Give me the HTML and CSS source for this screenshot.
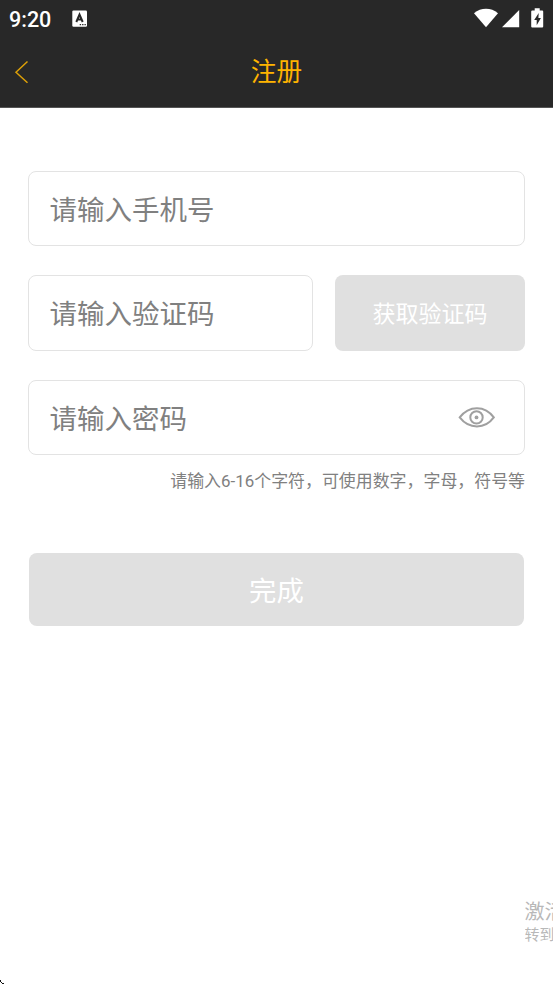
FILE: index.html
```html
<!DOCTYPE html>
<html lang="zh-CN">
<head>
<meta charset="utf-8">
<title>注册</title>
<link rel="stylesheet" href="styles.css">
</head>
<body>
<header class="header">
  <div class="status">
    <span class="time">9:20</span>
    <svg class="notice" width="16" height="18" viewBox="0 0 16 18"><rect x=".3" y=".5" width="14.7" height="16.2" rx="1.2" fill="#fff"/><path d="M4.3 12 7.5 4.500 10.700 12M5.500 9.500h4" fill="none" stroke="#282828" stroke-width="2"/><path d="M7.700 14.600h1.400m1 0h1.400m1 0h1.300" stroke="#282828" stroke-width="1.300"/></svg>
    <svg class="signals" width="72" height="22" viewBox="0 0 72 22" fill="#fff"><path d="M0 5.200C7-.600 17-.600 24 5.200L12 19.300Z"/><path d="M28 19.300 45.200 2v17.300Z"/><path d="M58.200 2.500h2.500V.300h5v2.200h2.500q1 0 1 1v15q0 1-1 1h-10q-1 0-1-1v-15q0-1 1-1Z"/><path d="M64.700 5 60.200 12h2.500v5.300L66.900 10h-2.500Z" fill="#282828"/></svg>
  </div>
  <div class="nav">
    <svg class="back" width="16" height="24" viewBox="0 0 16 24"><path d="M13.500 1.500 2 12.300 13.500 22.700" fill="none" stroke="#dca008" stroke-width="1.500"/></svg>
    <h1 class="title">注册</h1>
  </div>
</header>
<main class="form">
  <div class="field">请输入手机号</div>
  <div class="row">
    <div class="field code">请输入验证码</div>
    <button class="get-code">获取验证码</button>
  </div>
  <div class="field password">
    <span>请输入密码</span>
    <svg class="eye" width="38" height="22" viewBox="0 0 38 22" fill="none" stroke="#a0a0a0" stroke-width="2"><path d="M1.700 10.400C11-1.900 27-1.900 35.800 10.400 27 22.400 11 22.400 1.700 10.400Z"/><circle cx="18.500" cy="10.400" r="6.200"/><circle cx="18.500" cy="10.400" r="1.900" fill="#a0a0a0" stroke="none"/></svg>
  </div>
  <p class="hint">请输入6-16个字符，可使用数字，字母，符号等</p>
  <button class="submit">完成</button>
</main>
<div class="watermark"><div class="wm-title">激活</div><div class="wm-sub">转到</div></div>
<svg class="cursor" width="5" height="5" viewBox="0 0 5 5" fill="#111"><path d="M0 0h1v2H0ZM1 2h1v1H1ZM2 3h2v1H2Z"/></svg>
</body>
</html>
```
FILE: styles.css
```css
* { box-sizing: border-box; }
body {
  margin: 0;
  height: 984px;
  position: relative;
  overflow: hidden;
  background: #fff;
  font-family: Roboto, "Noto Sans CJK SC", sans-serif;
}
.header {
  height: 108px;
  background: #282828;
  border-bottom: 1px solid #555;
}
.status {
  height: 36px;
  display: flex;
  align-items: center;
  padding: 1px 7px 0 9px;
  color: #fff;
}
.time { width: 63px; font-size: 21.5px; font-weight: 500; line-height: 36px; padding-top: 2px; }
.signals { margin-left: auto; }
.nav {
  height: 71px;
  display: grid;
  grid-template-columns: 16px 1fr 16px;
  align-items: center;
  padding: 0 14px;
}
.back { margin-top: 1px; }
.title {
  margin: 0;
  padding-top: 2px;
  text-align: center;
  color: #ffb400;
  font-size: 25.7px;
  font-weight: 400;
  line-height: 68px;
  height: 71px;
}
.form { padding: 63px 28px 0; }
.field {
  height: 75px;
  border: 1px solid #e3e3e3;
  border-radius: 8px;
  padding: 1px 20.5px 0;
  color: #808080;
  font-size: 27.5px;
  line-height: 75px;
}
.row { display: flex; gap: 22px; margin: 29px 0; }
.row .field { height: 76px; }
.code { width: 285px; }
button {
  border: 0;
  padding: 0;
  background: #e0e0e0;
  border-radius: 8px;
  color: #fff;
  font-family: inherit;
}
.get-code { flex: 1; height: 76px; padding-top: 3px; font-size: 23px; line-height: 73px; }
.password { display: flex; align-items: center; justify-content: space-between; padding-right: 28px; padding-top: 0; }
.password span { padding-top: 3px; }
.hint {
  margin: 14px 0 0;
  text-align: right;
  white-space: nowrap;
  color: #808080;
  font-size: 16.93px;
  line-height: 25px;
}
.submit {
  display: block;
  width: 495px;
  height: 73px;
  margin: 59px 0 0 1px;
  padding-top: 5px;
  font-size: 27.4px;
  line-height: 68px;
}
.watermark {
  position: absolute;
  left: 524.5px;
  top: 900px;
  width: 28.5px;
  overflow: hidden;
  white-space: nowrap;
  color: #b8b8b8;
}
.wm-title { font-size: 20px; line-height: 25px; }
.wm-sub { font-size: 15px; line-height: 21px; }
.cursor { position: absolute; left: 0; top: 980px; }
```
